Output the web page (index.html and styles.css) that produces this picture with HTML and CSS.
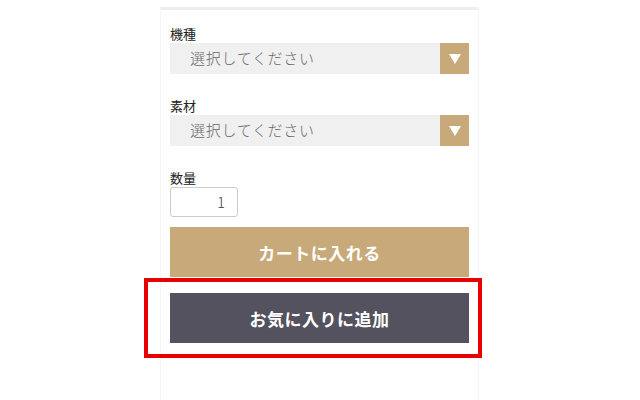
FILE: index.html
```html
<!DOCTYPE html>
<html lang="ja">
<head>
    <meta charset="UTF-8">
    <meta name="viewport" content="width=device-width, initial-scale=1.0">
    <title>カート</title>
    <link rel="stylesheet" href="styles.css">
</head>
<body>
    <div class="panel">
        <div class="field">
            <label class="field-label">機種</label>
            <div class="select">
                <span class="select-text">選択してください</span>
                <span class="select-arrow"></span>
            </div>
        </div>

        <div class="field">
            <label class="field-label">素材</label>
            <div class="select">
                <span class="select-text">選択してください</span>
                <span class="select-arrow"></span>
            </div>
        </div>

        <div class="field field-qty">
            <label class="field-label">数量</label>
            <div class="qty">1</div>
        </div>

        <button class="btn btn-cart">カートに入れる</button>
        <button class="btn btn-fav">お気に入りに追加</button>

        <!-- 強調枠 -->
        <div class="highlight"></div>
    </div>
</body>
</html>
```

FILE: styles.css
```css
body {
    margin: 0;
    background-color: #fff;
    font-family: "Noto Sans CJK JP", "Noto Sans", sans-serif;
    color: #333;
}

.panel {
    position: relative;
    width: 299px;
    margin: 7px 0 0 160px;
    padding: 15px 9px 60px;
    border-top: 3px solid #eee;
    border-left: 1px solid #f6f6f6;
    border-right: 1px solid #f6f6f6;
    display: flex;
    flex-direction: column;
}

.field {
    display: flex;
    flex-direction: column;
    margin-bottom: 23px;
}

.field-qty {
    margin-bottom: 10px;
}

.field-label {
    font-size: 13px;
    line-height: 18px;
    color: #222;
}

.select {
    display: flex;
    height: 31px;
    background-color: #f0f0f0;
}

.select-text {
    flex: 1;
    padding-left: 20px;
    font-size: 15px;
    font-weight: 300;
    letter-spacing: 0.7px;
    line-height: 30px;
    color: #666;
}

.select-arrow {
    width: 29px;
    background-color: #c8aa7a;
    display: flex;
    align-items: center;
    justify-content: center;
}

.select-arrow::before {
    content: "";
    border-left: 6px solid transparent;
    border-right: 6px solid transparent;
    border-top: 10px solid #fff;
}

.qty {
    width: 54px;
    height: 28px;
    padding-right: 12px;
    border: 1px solid #ccc;
    border-radius: 3px;
    font-size: 15px;
    font-weight: 300;
    line-height: 28px;
    text-align: right;
    color: #444;
}

.btn {
    height: 50px;
    border: none;
    color: #fff;
    font-family: inherit;
    font-size: 17px;
    font-weight: bold;
    letter-spacing: 0.5px;
    cursor: pointer;
}

.btn-cart {
    background-color: #c8aa7a;
}

.btn-fav {
    margin-top: 16px;
    background-color: #55525f;
}

.highlight {
    position: absolute;
    left: -17px;
    top: 268px;
    width: 330px;
    height: 72px;
    border: 4px solid #e80000;
    pointer-events: none;
}
```
